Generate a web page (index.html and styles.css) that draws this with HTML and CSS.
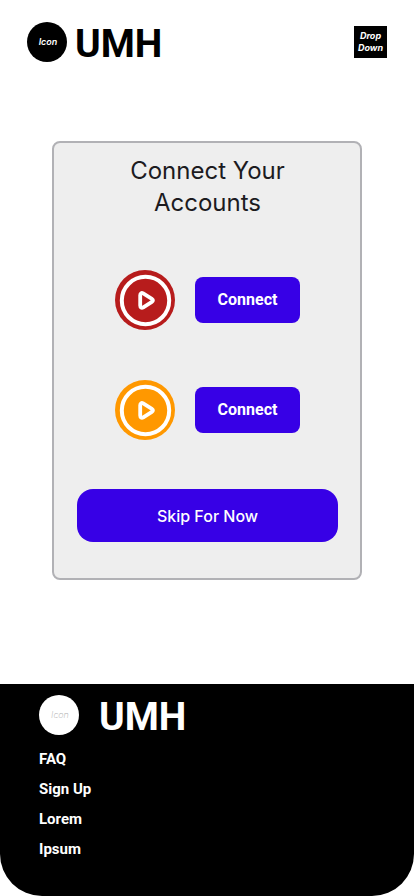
FILE: index.html
```html
<!DOCTYPE html>
<html lang="en">
<head>
  <meta charset="utf-8">
  <meta name="viewport" content="width=device-width, initial-scale=1">
  <title>UMH</title>
  <link rel="stylesheet" href="styles.css">
</head>
<body>
  <header class="header">
    <a class="brand" href="#"><span class="brand-icon">Icon</span><span class="brand-name">UMH</span></a>
    <button class="menu-button" type="button">Drop Down</button>
  </header>
  <main class="main">
    <section class="card">
      <h1 class="title">Connect Your Accounts</h1>
      <div class="accounts">
        <div class="account">
          <svg class="play play-red" viewBox="0 0 60 60" aria-hidden="true">
            <circle cx="30" cy="30" r="30" fill="currentColor"/>
            <circle cx="30.5" cy="30.5" r="23.7" fill="none" stroke="#fff" stroke-width="4"/>
            <path d="M25.2 25.3c0-2 1.3-2.8 3-1.9l8.7 5.4c1.4.9 1.4 2.1 0 3l-8.6 5.5c-1.7 1-3.1.3-3.1-1.7z" fill="none" stroke="#fff" stroke-width="3.8" stroke-linejoin="round"/>
          </svg>
          <button class="connect" type="button">Connect</button>
        </div>
        <div class="account">
          <svg class="play play-orange" viewBox="0 0 60 60" aria-hidden="true">
            <circle cx="30" cy="30" r="30" fill="currentColor"/>
            <circle cx="30.5" cy="30.5" r="23.7" fill="none" stroke="#fff" stroke-width="4"/>
            <path d="M25.2 25.3c0-2 1.3-2.8 3-1.9l8.7 5.4c1.4.9 1.4 2.1 0 3l-8.6 5.5c-1.7 1-3.1.3-3.1-1.7z" fill="none" stroke="#fff" stroke-width="3.8" stroke-linejoin="round"/>
          </svg>
          <button class="connect" type="button">Connect</button>
        </div>
      </div>
      <button class="skip" type="button">Skip For Now</button>
    </section>
  </main>
  <footer class="footer">
    <a class="brand brand-light" href="#"><span class="brand-icon">Icon</span><span class="brand-name">UMH</span></a>
    <nav class="links">
      <a href="#">FAQ</a>
      <a href="#">Sign Up</a>
      <a href="#">Lorem</a>
      <a href="#">Ipsum</a>
    </nav>
  </footer>
</body>
</html>
```
FILE: styles.css
```css
* {
  box-sizing: border-box;
}

body {
  margin: 0;
  min-height: 100vh;
  display: flex;
  flex-direction: column;
  background: #fff;
  font-family: Roboto, sans-serif;
}

a {
  color: inherit;
  text-decoration: none;
}

button {
  border: 0;
  padding: 0;
  cursor: pointer;
}

.header {
  display: flex;
  justify-content: space-between;
  align-items: center;
  padding: 22px 27px;
}

.brand {
  display: flex;
  align-items: center;
  gap: 8px;
  height: 40px;
  color: #000;
}

.brand-icon {
  width: 40px;
  height: 40px;
  border-radius: 50%;
  display: flex;
  align-items: center;
  justify-content: center;
  padding-left: 2px;
  background: #000;
  color: #fff;
  font: italic 600 9px/12px Inter, sans-serif;
}

.brand-name {
  padding-top: 3px;
  font-size: 39px;
  line-height: 40px;
  font-weight: 700;
}

.menu-button {
  width: 33px;
  height: 32px;
  padding-bottom: 1px;
  background: #000;
  color: #fff;
  font: italic 700 9px/12px Inter, sans-serif;
}

.main {
  flex: 1;
  padding: 57px 52px 104px;
}

.card {
  padding: 12px 22px 36px 23px;
  border: 2px solid #b1b1b5;
  border-radius: 8px;
  background: #eee;
}

.title {
  max-width: 200px;
  margin: 0 auto;
  color: #1c1b1f;
  font: 400 24px/32px Inter, sans-serif;
  text-align: center;
}

.accounts {
  display: flex;
  flex-direction: column;
  align-items: center;
  gap: 50px;
  margin: 51px 0 49px;
}

.account {
  display: flex;
  align-items: center;
  gap: 20px;
}

.play {
  width: 60px;
  height: 60px;
}

.play-red {
  color: #b71c1c;
}

.play-orange {
  color: #ff9800;
}

.connect {
  width: 105px;
  height: 46px;
  border-radius: 8px;
  background: #3700e6;
  color: #fff;
  font: 700 16px/24px Roboto, sans-serif;
}

.skip {
  width: 100%;
  height: 53px;
  border-radius: 16px;
  background: #3700e6;
  color: #fff;
  font: 500 16px/24px Inter, sans-serif;
}

.footer {
  padding: 11px 39px 32px;
  border-radius: 0 0 42px 42px;
  background: #000;
  color: #fff;
}

.brand-light {
  gap: 20px;
  color: #fff;
}

.brand-light .brand-icon {
  background: #fff;
  color: #aaa;
  font-weight: 200;
}

.links {
  display: flex;
  flex-direction: column;
  align-items: flex-start;
  padding-top: 9px;
  font-size: 15px;
  line-height: 30px;
  font-weight: 700;
}
```
